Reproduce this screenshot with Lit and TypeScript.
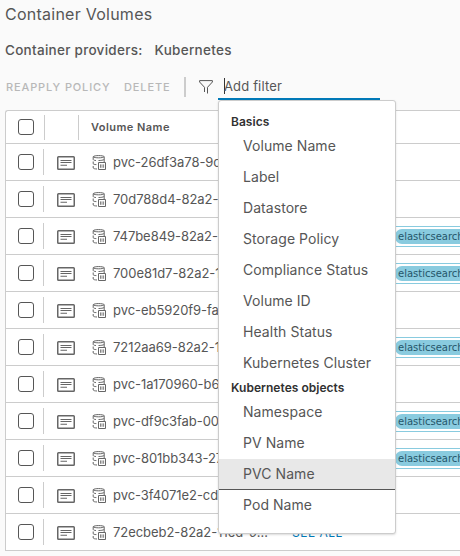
import { LitElement, html, css, svg } from "lit";
import { customElement, property } from "lit/decorators.js";
import { classMap } from "lit/directives/class-map.js";

interface Volume { name: string; label?: string; seeAll?: boolean }

const VOLUMES: Volume[] = [
  { name: "pvc-26df3a78-9c" },
  { name: "70d788d4-82a2-1" },
  { name: "747be849-82a2-1", label: "elasticsearch" },
  { name: "700e81d7-82a2-1", label: "elasticsearch" },
  { name: "pvc-eb5920f9-fa" },
  { name: "7212aa69-82a2-11", label: "elasticsearch" },
  { name: "pvc-1a170960-b6" },
  { name: "pvc-df9c3fab-00", label: "elasticsearch" },
  { name: "pvc-801bb343-27", label: "elasticsearch" },
  { name: "pvc-3f4071e2-cd" },
  { name: "72ecbeb2-82a2-11ed-9…", seeAll: true },
];

const GROUPS = [
  { title: "Basics", items: ["Volume Name", "Label", "Datastore", "Storage Policy", "Compliance Status", "Volume ID", "Health Status", "Kubernetes Cluster"] },
  { title: "Kubernetes objects", items: ["Namespace", "PV Name", "PVC Name", "Pod Name"] },
];

const cardIcon = svg`<svg width="18" height="14" viewBox="0 0 18 14" fill="none" stroke="#666">
  <rect x="0.75" y="0.75" width="16.5" height="12.5" rx="0.8" stroke-width="1.5"/>
  <path d="M3.5 4.5H14.5M3.5 6.5H14.5M3.5 9.3H10" stroke-width="1.1"/></svg>`;

const volumeIcon = svg`<svg width="14" height="15" viewBox="0 0 14 15" fill="none" stroke="#666" stroke-width="1">
  <path d="M1.2 1.7C2.2 .2 11.2 .2 12.2 1.7C11.2 3.2 2.2 3.2 1.2 1.7ZM1.2 1.7V4.5C1.6 5.2 2.6 5.4 4 5.5M12.2 1.7V7M6.5 5.5C9 5.5 11 5.2 12.2 4.5M1.2 6.5V8.8C1.6 9.3 2.4 9.5 4.4 9.6M1.2 11V13C1.6 13.6 2.6 13.9 5 14"/>
  <path d="M6.5 7.5H13.5V14.5H6.5Z"/><path d="M8.5 9.4V12.8M10 9.4V12.8M11.6 9.4V12.8" stroke-width=".8"/></svg>`;

const funnelIcon = svg`<svg width="14" height="14" viewBox="0 0 14 14" fill="none" stroke="#565656" stroke-width="1">
  <path d="M5.5 12V7.3L.6 2V.6H13.4V2L8.5 7.3V13.5"/></svg>`;

@customElement("filter-menu")
export class FilterMenu extends LitElement {
  @property() active = "PVC Name";

  static styles = css`
    :host { display: block; box-sizing: border-box; width: 178px; padding: 12px 0; background: #fff;
      border: 1px solid #ccc; border-radius: 3px; box-shadow: 0 1px 2px rgba(115,115,115,.25); }
    .title { height: 18px; line-height: 17px; padding-left: 12px; font-size: 12px; font-weight: 600; color: #313131; letter-spacing: .03px; white-space: nowrap; }
    .item { box-sizing: border-box; height: 31px; line-height: 30px; padding-left: 24px; font-size: 14px; letter-spacing: .06px; color: #565656; white-space: nowrap; }
    .active { background: #e8e8e8; border-bottom: 1px solid #565656; }
  `;

  render() {
    return GROUPS.map((g) => html`
      <div class="title">${g.title}</div>
      ${g.items.map((i) => html`<div class=${classMap({ item: true, active: i === this.active })}>${i}</div>`)}
    `);
  }
}

@customElement("volume-grid")
export class VolumeGrid extends LitElement {
  static styles = css`
    :host { display: block; box-sizing: border-box; border: 1px solid #ccc; border-right: 0; border-radius: 3px 0 0 0; background: #fff; }
    .row { display: flex; box-sizing: border-box; height: 37px; border-bottom: 1px solid #ccc; }
    .row:last-child { height: 36px; border-bottom: 0; }
    .head { height: 33px; }
    .cell { box-sizing: border-box; display: flex; align-items: center; flex: none; }
    .check { width: 38px; padding-left: 12px; }
    .head .check { width: 39px; }
    .check::after, .head .detail::after { content: ""; width: 1px; background: #ccc; height: 26px; margin-left: auto; }
    .head .check::after, .head .detail::after { height: 25px; }
    .box { box-sizing: border-box; width: 16px; height: 16px; border: 1px solid #565656; border-radius: 3px; }
    .detail { width: 47px; padding: 2px 0 0 13px; }
    .head .detail { width: 34px; padding: 0; }
    .name { width: 194px; gap: 7px; font-size: 13px; color: #565656; white-space: nowrap; letter-spacing: -.05px; }
    .head .name { padding-left: 12px; font-size: 11px; font-weight: 600; letter-spacing: .45px; }
    .text { padding-bottom: 1px; }
    .row:not(.head) .name { padding-left: 1px; }
    .labels { flex: 1 1 0; min-width: 0; overflow: hidden; }
    .frame { box-sizing: border-box; display: flex; align-items: center; width: 100%; height: 21px; padding-left: 109px; border: 1px solid #89cbdf; border-right: 0; }
    .tag { box-sizing: border-box; flex: none; width: 90px; height: 15px; border-radius: 7px; padding-left: 3px; background: #89cbdf; color: #25566a; font: 10px/15px "DejaVu Sans", sans-serif; }
    .link { padding-left: 7px; color: #0079b8; font-size: 12px; letter-spacing: .5px; }
    svg { display: block; flex: none; }
  `;

  render() {
    return html`
      <div class="row head">
        <div class="cell check"><span class="box"></span></div>
        <div class="cell detail"></div>
        <div class="cell name">Volume Name</div>
      </div>
      ${VOLUMES.map((v) => html`
        <div class="row">
          <div class="cell check"><span class="box"></span></div>
          <div class="cell detail">${cardIcon}</div>
          <div class="cell name">${volumeIcon}<span class="text">${v.name}</span></div>
          <div class="cell labels">
            ${v.label ? html`<div class="frame"><span class="tag">${v.label}</span></div>` : ""}
            ${v.seeAll ? html`<span class="link">SEE ALL</span>` : ""}
          </div>
        </div>`)}
    `;
  }
}

@customElement("app-root")
export class AppRoot extends LitElement {
  static styles = css`
    :host { display: block; box-sizing: border-box; width: 460px; height: 556px; padding-left: 5px; overflow: hidden; background: #fafafa; color: #565656; font-family: Inter, sans-serif; }
    h1 { margin: 0; height: 38px; line-height: 28px; font-size: 16px; font-weight: 400; letter-spacing: .25px; color: #565656; }
    .providers { display: flex; gap: 12px; height: 36px; line-height: 25px; font-size: 13.5px; letter-spacing: .28px; font-weight: 500; }
    .toolbar { display: flex; align-items: center; height: 26px; }
    .action { box-sizing: border-box; flex: none; font-size: 11px; font-weight: 500; letter-spacing: .87px; color: #b8b8b8; padding-left: 1px; }
    .reapply { width: 118px; }
    .delete { width: 61px; }
    .bar { flex: none; width: 2px; height: 20px; background: #ccc; }
    .funnel { flex: none; margin-left: 13px; }
    .funnel svg { display: block; }
    .filter { position: relative; box-sizing: border-box; margin-left: 5px; width: 162px; height: 26px; padding-left: 6px; border-bottom: 2px solid #0079b8; display: flex; align-items: center; font-size: 13px; letter-spacing: .15px; }
    .caret { width: 1px; height: 16px; margin-right: -1px; background: #333; }
    filter-menu { position: absolute; left: 0; top: 26px; z-index: 2; }
    volume-grid { margin-top: 10px; }
  `;

  render() {
    return html`
      <h1>Container Volumes</h1>
      <div class="providers"><span>Container providers:</span><span>Kubernetes</span></div>
      <div class="toolbar">
        <span class="action reapply">REAPPLY POLICY</span>
        <span class="action delete">DELETE</span>
        <span class="bar"></span>
        <span class="funnel">${funnelIcon}</span>
        <div class="filter"><span class="caret"></span><span>Add filter</span><filter-menu></filter-menu></div>
      </div>
      <volume-grid></volume-grid>
    `;
  }
}
